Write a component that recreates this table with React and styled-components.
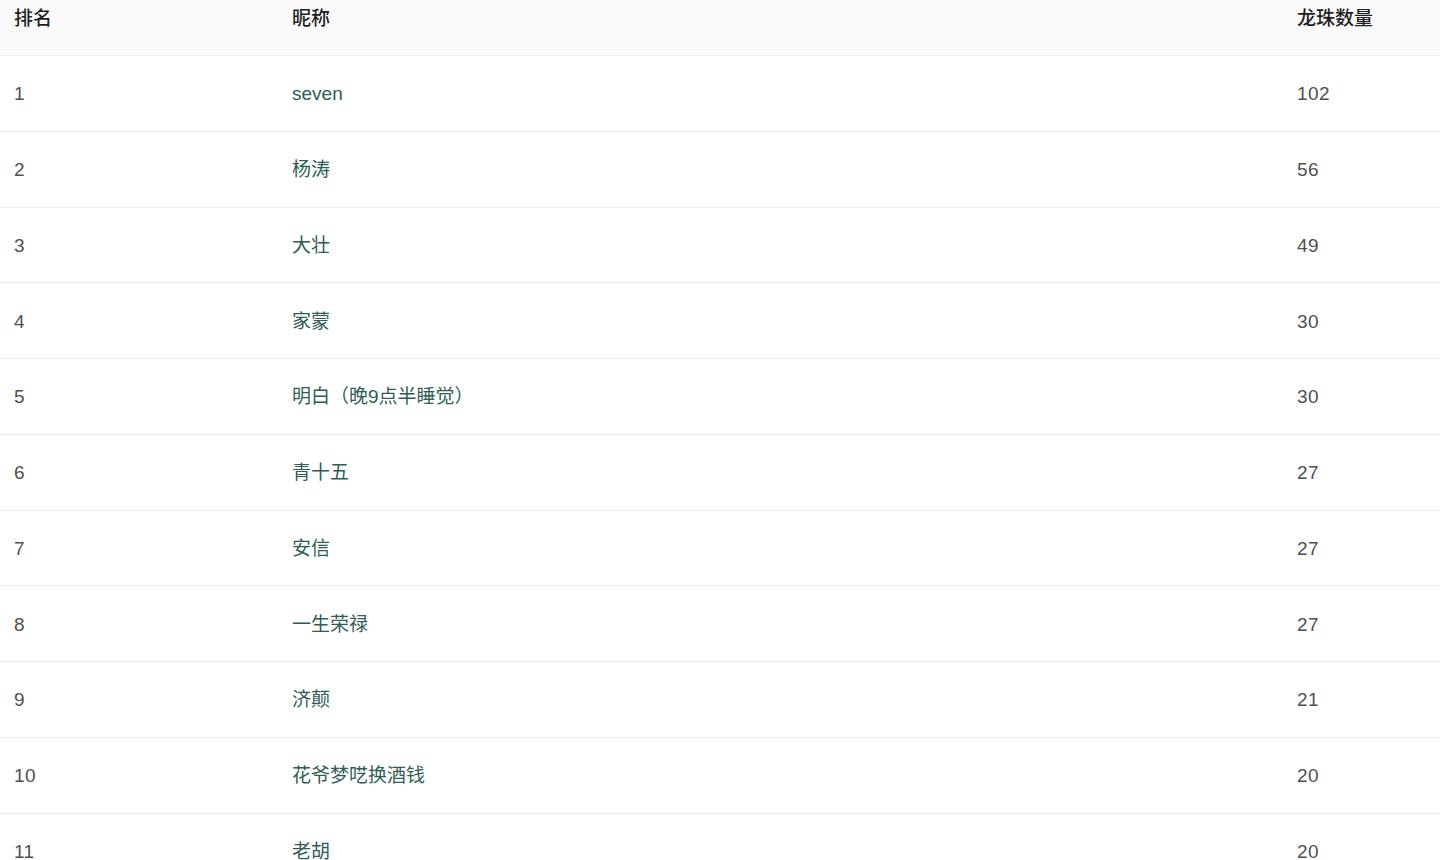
import React from 'react';
import styled, { createGlobalStyle } from 'styled-components';

const GlobalStyle = createGlobalStyle`
    html, body {
        margin: 0;
        padding: 0;
        background: #ffffff;
        font-family: "Liberation Sans", "Noto Sans CJK SC", sans-serif;
    }
`;

const Table = styled('div')`
    width: 1440px;
    display: flex;
    flex-direction: column;
`;

const HeaderRow = styled('div')`
    display: grid;
    grid-template-columns: 278px 1005px 1fr;
    height: 56px;
    box-sizing: border-box;
    background: #fafafa;
    border-bottom: 1px solid #ececec;
`;

const HeaderCell = styled('div')`
    padding: 6px 14px 0;
    font-size: 19px;
    line-height: 26px;
    font-weight: 500;
    color: #1f1f1f;
`;

const Row = styled('div')`
    display: grid;
    grid-template-columns: 278px 1005px 1fr;
    align-items: center;
    height: 75.75px;
    box-sizing: border-box;
    border-bottom: 1px solid #ececec;
`;

const Cell = styled('div')`
    padding: 2px 14px 0;
    font-size: 19px;
    line-height: 26px;
    letter-spacing: ${props => props.link ? '0' : '0.4px'};
    color: ${props => props.link ? '#2f5d55' : '#505050'};
`;

const ranking = [
    { rank: 1, name: 'seven', count: 102 },
    { rank: 2, name: '杨涛', count: 56 },
    { rank: 3, name: '大壮', count: 49 },
    { rank: 4, name: '家蒙', count: 30 },
    { rank: 5, name: '明白（晚9点半睡觉）', count: 30 },
    { rank: 6, name: '青十五', count: 27 },
    { rank: 7, name: '安信', count: 27 },
    { rank: 8, name: '一生荣禄', count: 27 },
    { rank: 9, name: '济颠', count: 21 },
    { rank: 10, name: '花爷梦呓换酒钱', count: 20 },
    { rank: 11, name: '老胡', count: 20 },
];

export default function App() {
    return (
        <>
            <GlobalStyle />
            <Table>
                <HeaderRow>
                    <HeaderCell>排名</HeaderCell>
                    <HeaderCell>昵称</HeaderCell>
                    <HeaderCell>龙珠数量</HeaderCell>
                </HeaderRow>
                {ranking.map((item) => (
                    <Row key={item.rank}>
                        <Cell>{item.rank}</Cell>
                        <Cell link>{item.name}</Cell>
                        <Cell>{item.count}</Cell>
                    </Row>
                ))}
            </Table>
        </>
    );
}
